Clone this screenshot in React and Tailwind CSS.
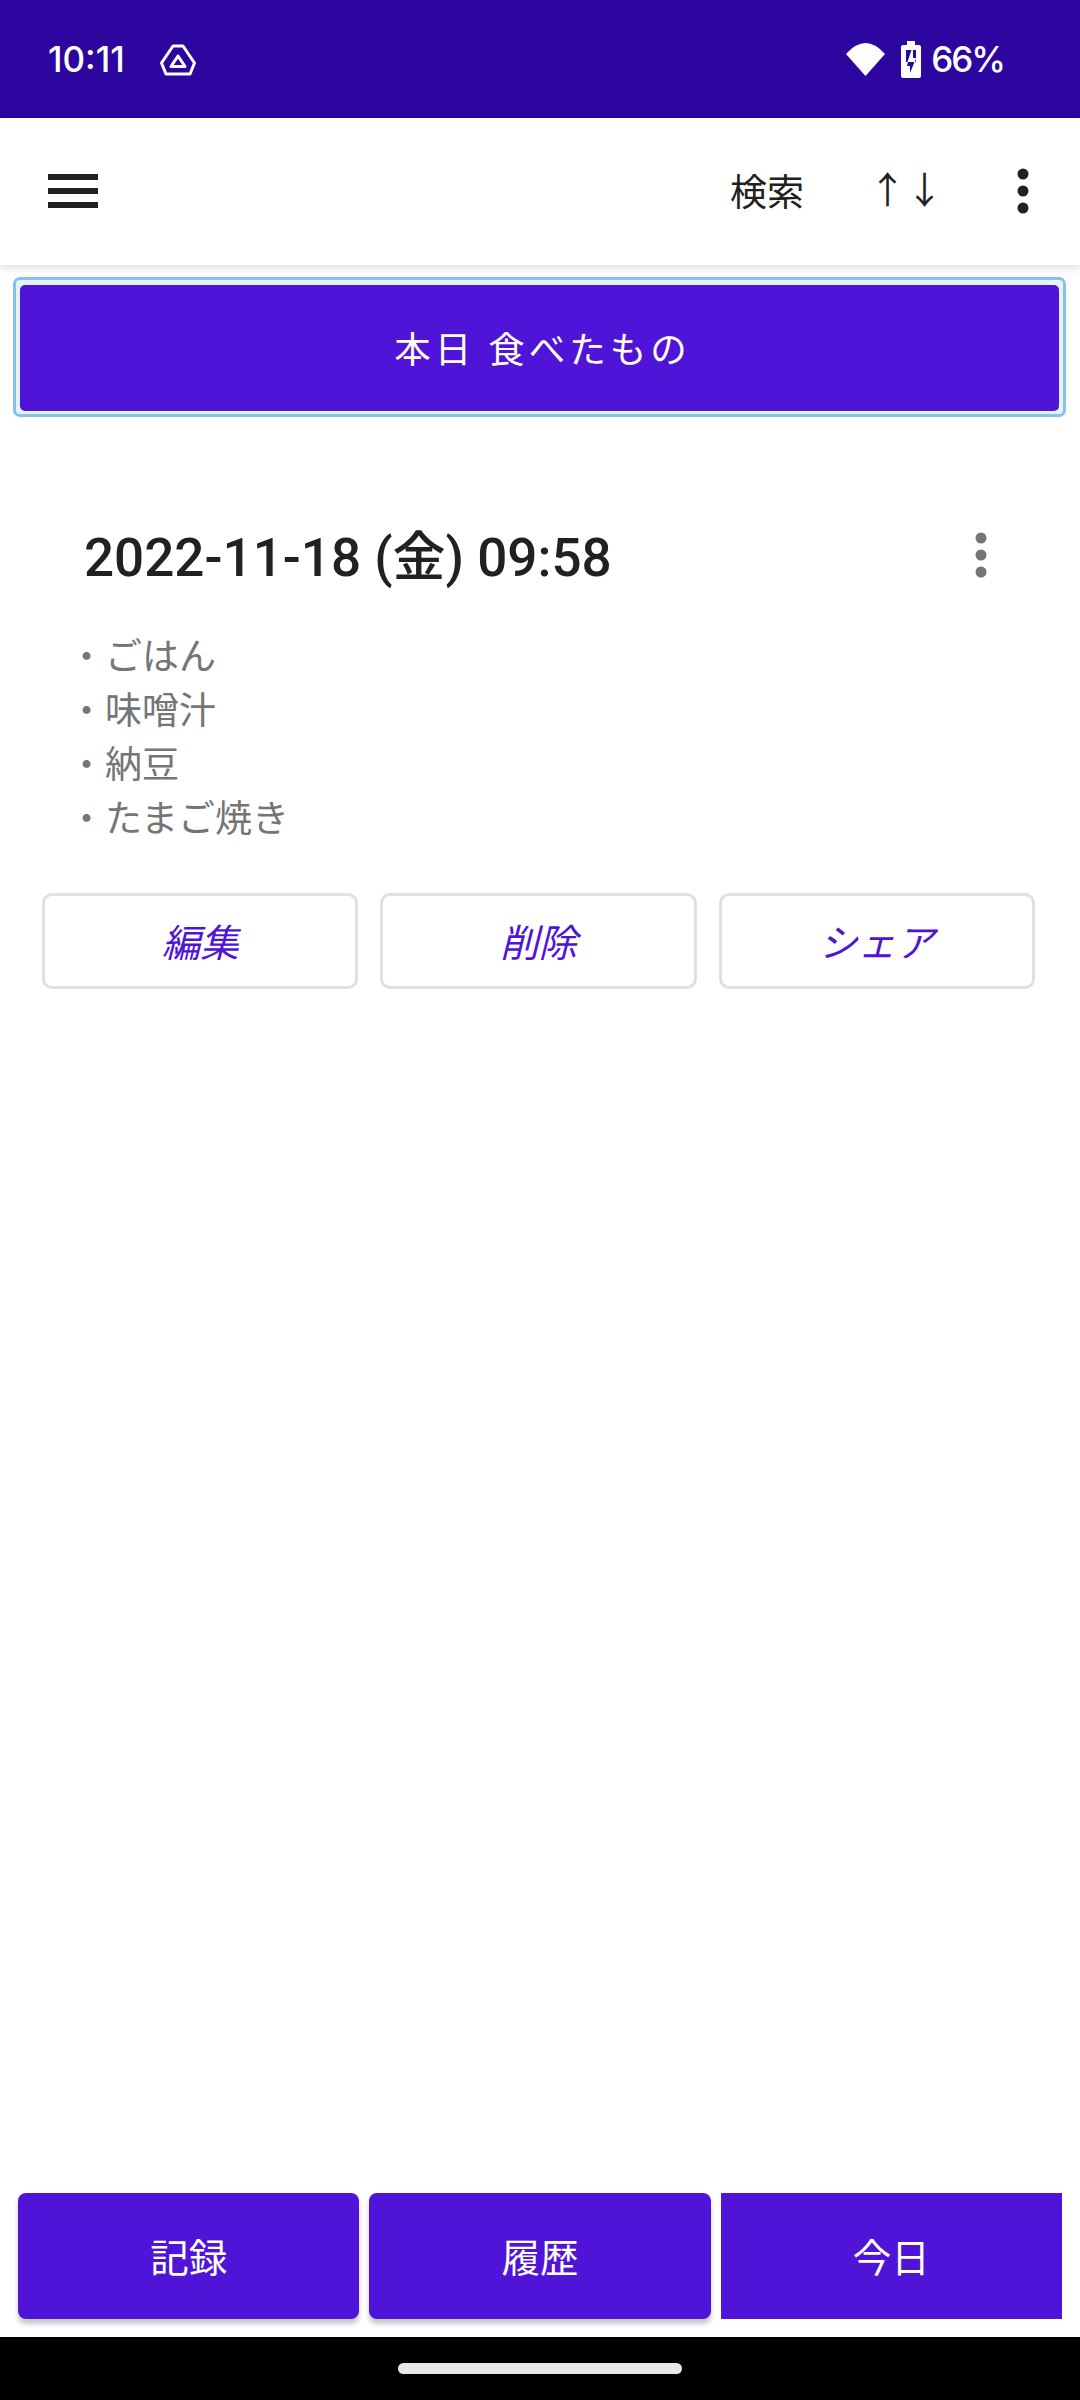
const CJK = "font-['Roboto','Noto_Sans_CJK_JP',sans-serif]";

function Kebab({ className }) {
  return (
    <svg width="12" height="46" viewBox="0 0 12 46" className={className} fill="currentColor">
      <circle cx="6" cy="6" r="5.5" />
      <circle cx="6" cy="23" r="5.5" />
      <circle cx="6" cy="40" r="5.5" />
    </svg>
  );
}

function StatusBar() {
  return (
    <div className="h-[118px] shrink-0 bg-[#2c069e] flex items-center pl-[48px] pr-[76px] pt-[1px] text-white font-['Inter',sans-serif] text-[35px] leading-none">
      <span className="font-medium">10:11</span>
      <svg width="36" height="32" viewBox="0 0 36 32" className="ml-[35px]" fill="none" stroke="white" strokeWidth="3" strokeLinejoin="round">
        <path d="M13 2 L23 2 L34.5 19 L30 30 L6 30 L1.5 19 Z" />
        <path d="M18 12 L25 22.5 L11 22.5 Z" />
      </svg>
      <div className="flex-1" />
      <svg width="39" height="33" viewBox="0 0 39 33" fill="white">
        <path d="M19.5 33 L0 11 Q19.5 -11 39 11 Z" />
      </svg>
      <svg width="20" height="37" viewBox="0 0 20 37" className="ml-[16px]">
        <path fill="white" d="M6 0 H14 V4 H18 Q20 4 20 6 V35 Q20 37 18 37 H2 Q0 37 0 35 V6 Q0 4 2 4 H6 Z" />
        <path fill="#2c069e" d="M5 9 H15 V21 H5 Z" />
        <path fill="white" d="M10.5 9 H12 V17 H15 L14 21 H6.5 Z" />
        <path fill="#2c069e" d="M7 21 H13.5 L9 32 V25 H6 Z" />
      </svg>
      <span className="ml-[10px] font-medium tracking-[-2px]">66%</span>
    </div>
  );
}

function Toolbar() {
  return (
    <div className={`relative z-10 h-[147px] shrink-0 bg-white shadow-[0_3px_8px_rgba(0,0,0,0.14)] flex items-center pl-[48px] pr-[51px] pb-[2px] text-[#212121] ${CJK}`}>
      <div className="flex flex-col gap-[8px]">
        <div className="w-[50px] h-[6px] bg-[#212121]" />
        <div className="w-[50px] h-[6px] bg-[#212121]" />
        <div className="w-[50px] h-[6px] bg-[#212121]" />
      </div>
      <div className="flex-1" />
      <span className="text-[37px] leading-none pt-[5px]">検索</span>
      <span className="ml-[65px] text-[37px] leading-none w-[64px] text-center pt-[2px]">↑↓</span>
      <Kebab className="ml-[84px]" />
    </div>
  );
}

const foods = ["ごはん", "味噌汁", "納豆", "たまご焼き"];

function Card() {
  return (
    <div className={`mt-[110px] ${CJK}`}>
      <div className="flex items-start justify-between pl-[84px] pr-[93px]">
        <div className="text-[53px] leading-[62px] font-medium text-[#212121]">2022-11-18 (金) 09:58</div>
        <Kebab className="text-[#757575] mt-[5px]" />
      </div>
      <div className="mt-[42px] pl-[68px] text-[37px] leading-[54px] text-[#757575]">
        {foods.map((f) => (
          <div key={f}>・{f}</div>
        ))}
      </div>
      <div className="mt-[46px] pl-[42px] pr-[45px] grid grid-cols-3 gap-[22px]">
        {["編集", "削除", "シェア"].map((label) => (
          <div key={label} className="h-[96px] border-[3px] border-[#e0e0e0] rounded-[10px] flex items-center justify-center pt-[5px] italic text-[38.5px] text-[#5014d8]">
            {label}
          </div>
        ))}
      </div>
    </div>
  );
}

function BottomButtons() {
  return (
    <div className={`shrink-0 pl-[18px] pr-[18px] pb-[18px] grid grid-cols-3 gap-[10px] text-white text-[38.5px] ${CJK}`}>
      <div className="h-[126px] bg-[#5014d8] rounded-[8px] shadow-[0_5px_5px_rgba(0,0,0,0.22)] flex items-center justify-center pt-[5px]">記録</div>
      <div className="h-[126px] bg-[#5014d8] rounded-[8px] shadow-[0_5px_5px_rgba(0,0,0,0.22)] flex items-center justify-center pt-[5px]">履歴</div>
      <div className="h-[126px] bg-[#5014d8] flex items-center justify-center pt-[5px]">今日</div>
    </div>
  );
}

export default function App() {
  return (
    <div className="w-[1080px] h-[2400px] bg-white flex flex-col overflow-hidden">
      <StatusBar />
      <Toolbar />
      <div className="flex-1 min-h-0">
        <div className={`ml-[13px] mr-[14px] mt-[12px] h-[140px] border-[3px] border-[#86c0ee] rounded-[7px] bg-[#e6f2fc] px-[4px] pt-[5px] pb-[3px] ${CJK}`}>
          <div className="h-full bg-[#5014d8] rounded-[5px] flex items-center justify-center pt-[6px] pl-[6px] text-white text-[36.5px] tracking-[4px]">
            本日 食べたもの
          </div>
        </div>
        <Card />
      </div>
      <BottomButtons />
      <div className="h-[63px] shrink-0 bg-black flex justify-center pt-[26px]">
        <div className="w-[284px] h-[11px] rounded-full bg-[#e8e8e8]" />
      </div>
    </div>
  );
}
